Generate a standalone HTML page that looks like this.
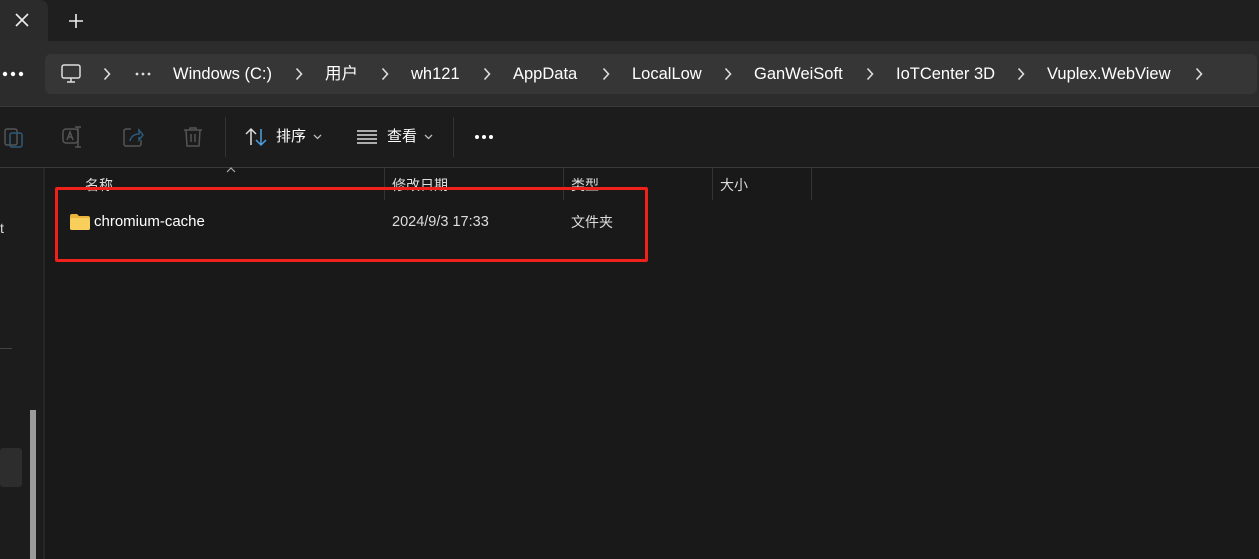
<!DOCTYPE html>
<html><head><meta charset="utf-8"><style>
*{margin:0;padding:0;box-sizing:border-box}
body{width:1259px;height:559px;overflow:hidden;background:#191919;font-family:"Liberation Sans","Noto Sans CJK SC",sans-serif;color:#fff;position:relative}
.a{position:absolute;line-height:20px}
.t{font-size:16.5px;color:#fff;white-space:nowrap}
.s{font-size:14px;white-space:nowrap}
.ch{font-size:14px;color:#ddd}
.cv{position:absolute;top:67px}
</style></head><body>
<div class="a" style="left:0;top:0;width:1259px;height:41px;background:#1f1f1f"></div>
<div class="a" style="left:0;top:0;width:48px;height:41px;background:#2b2b2b;border-top-right-radius:8px"></div>
<svg class="a" style="left:15px;top:13px" width="14" height="14" viewBox="0 0 14 14" stroke="#eee" stroke-width="1.6"><path d="M1 1l12 12M13 1L1 13"/></svg>
<svg class="a" style="left:69px;top:14px" width="14" height="14" viewBox="0 0 14 14" stroke="#eee" stroke-width="1.6"><path d="M7 0v14M0 7h14"/></svg>
<div class="a" style="left:0;top:41px;width:1259px;height:66px;background:#2c2c2c;border-bottom:1px solid #3a3a3a"></div>
<svg class="a" style="left:2px;top:71px" width="22" height="6"><circle cx="3" cy="3" r="2.2" fill="#fff"/><circle cx="11" cy="3" r="2.2" fill="#fff"/><circle cx="19" cy="3" r="2.2" fill="#fff"/></svg>
<div class="a" style="left:45px;top:54px;width:1212px;height:40px;background:#363636;border-radius:6px"></div>
<svg class="a" style="left:60px;top:63px" width="22" height="22" viewBox="0 0 22 22" fill="none" stroke="#ddd" stroke-width="1.5"><rect x="2" y="2" width="18" height="13" rx="2"/><path d="M7 19h8M11 15v4"/></svg>
<svg class="cv" style="left:103px" width="8" height="14" viewBox="0 0 8 14" fill="none" stroke="#ddd" stroke-width="1.6"><path d="M1.5 1.5l5 5.5-5 5.5"/></svg>
<svg class="a" style="left:135px;top:72px" width="16" height="4"><circle cx="2" cy="2" r="1.4" fill="#ddd"/><circle cx="8" cy="2" r="1.4" fill="#ddd"/><circle cx="14" cy="2" r="1.4" fill="#ddd"/></svg>
<div class="a t" style="left:173px;top:64px">Windows (C:)</div>
<svg class="cv" style="left:295px" width="8" height="14" viewBox="0 0 8 14" fill="none" stroke="#ddd" stroke-width="1.6"><path d="M1.5 1.5l5 5.5-5 5.5"/></svg>
<div class="a t" style="left:325px;top:64px;line-height:20px">用户</div>
<svg class="cv" style="left:381px" width="8" height="14" viewBox="0 0 8 14" fill="none" stroke="#ddd" stroke-width="1.6"><path d="M1.5 1.5l5 5.5-5 5.5"/></svg>
<div class="a t" style="left:411px;top:64px">wh121</div>
<svg class="cv" style="left:483px" width="8" height="14" viewBox="0 0 8 14" fill="none" stroke="#ddd" stroke-width="1.6"><path d="M1.5 1.5l5 5.5-5 5.5"/></svg>
<div class="a t" style="left:513px;top:64px">AppData</div>
<svg class="cv" style="left:602px" width="8" height="14" viewBox="0 0 8 14" fill="none" stroke="#ddd" stroke-width="1.6"><path d="M1.5 1.5l5 5.5-5 5.5"/></svg>
<div class="a t" style="left:632px;top:64px">LocalLow</div>
<svg class="cv" style="left:724px" width="8" height="14" viewBox="0 0 8 14" fill="none" stroke="#ddd" stroke-width="1.6"><path d="M1.5 1.5l5 5.5-5 5.5"/></svg>
<div class="a t" style="left:754px;top:64px">GanWeiSoft</div>
<svg class="cv" style="left:866px" width="8" height="14" viewBox="0 0 8 14" fill="none" stroke="#ddd" stroke-width="1.6"><path d="M1.5 1.5l5 5.5-5 5.5"/></svg>
<div class="a t" style="left:896px;top:64px">IoTCenter 3D</div>
<svg class="cv" style="left:1017px" width="8" height="14" viewBox="0 0 8 14" fill="none" stroke="#ddd" stroke-width="1.6"><path d="M1.5 1.5l5 5.5-5 5.5"/></svg>
<div class="a t" style="left:1047px;top:64px">Vuplex.WebView</div>
<svg class="cv" style="left:1195px" width="8" height="14" viewBox="0 0 8 14" fill="none" stroke="#ddd" stroke-width="1.6"><path d="M1.5 1.5l5 5.5-5 5.5"/></svg>
<div class="a" style="left:0;top:107px;width:1259px;height:61px;background:#1c1c1c;border-bottom:1px solid #3a3a3a"></div>
<svg class="a" style="left:2px;top:125px" width="24" height="24" viewBox="0 0 24 24" fill="none" stroke="#555" stroke-width="1.5"><rect x="3" y="4" width="12" height="16" rx="2"/><rect x="8" y="8" width="12" height="14" rx="2" stroke="#2c5a7a"/></svg>
<svg class="a" style="left:62px;top:126px" width="22" height="22" viewBox="0 0 22 22" fill="none" stroke="#555" stroke-width="1.5"><rect x="1" y="3" width="15" height="14" rx="3"/><path d="M16 1v20M13 1h6M13 21h6M5 14l3-8 3 8M6 11h4"/></svg>
<svg class="a" style="left:122px;top:126px" width="22" height="22" viewBox="0 0 22 22" fill="none" stroke="#555" stroke-width="1.5"><path d="M9 3H4a2 2 0 0 0-2 2v13a2 2 0 0 0 2 2h13a2 2 0 0 0 2-2v-4"/><path d="M8 15c1-5 5-7 9-7V4l4 5-4 5v-3" stroke="#2c5a7a"/></svg>
<svg class="a" style="left:183px;top:126px" width="20" height="22" viewBox="0 0 20 22" fill="none" stroke="#555" stroke-width="1.5"><path d="M1 4h18M7 4V2h6v2M3 4l1 16h12l1-16M8 8v8M12 8v8"/></svg>
<div class="a" style="left:225px;top:117px;width:1px;height:40px;background:#333"></div>
<svg class="a" style="left:245px;top:127px" width="22" height="20" viewBox="0 0 22 20" fill="none" stroke-width="1.5"><path d="M6 18V2M1 7l5-5 5 5" stroke="#ddd"/><path d="M16 2v16M11 13l5 5 5-5" stroke="#4ca0e0"/></svg>
<div class="a" style="left:276px;top:127px;font-size:15px">排序</div>
<svg class="a" style="left:313px;top:134px" width="9" height="6" fill="none" stroke="#bbb" stroke-width="1.3"><path d="M1 1l3.5 3.5L8 1"/></svg>
<svg class="a" style="left:357px;top:130px" width="20" height="14" viewBox="0 0 20 14" stroke="#ddd" stroke-width="1.5"><path d="M0 1h20M0 5h20M0 9h20M0 13h20"/></svg>
<div class="a" style="left:387px;top:127px;font-size:15px">查看</div>
<svg class="a" style="left:424px;top:134px" width="9" height="6" fill="none" stroke="#bbb" stroke-width="1.3"><path d="M1 1l3.5 3.5L8 1"/></svg>
<div class="a" style="left:453px;top:117px;width:1px;height:40px;background:#333"></div>
<svg class="a" style="left:474px;top:134px" width="22" height="6"><circle cx="3" cy="3" r="2" fill="#fff"/><circle cx="10" cy="3" r="2" fill="#fff"/><circle cx="17" cy="3" r="2" fill="#fff"/></svg>
<div class="a" style="left:0;top:168px;width:45px;height:391px;background:#1c1c1c;border-right:2px solid #262626"></div>
<div class="a" style="left:0;top:218px;font-size:14px;color:#ddd">t</div>
<div class="a" style="left:0;top:348px;width:12px;height:1px;background:#444"></div>
<div class="a" style="left:0;top:448px;width:22px;height:39px;background:#2d2d2d;border-radius:3px"></div>
<div class="a" style="left:30px;top:410px;width:6px;height:149px;background:#9a9a9a"></div>
<svg class="a" style="left:226px;top:167px" width="10" height="6" fill="none" stroke="#aaa" stroke-width="1.2"><path d="M1 5l4-4 4 4"/></svg>
<div class="a ch" style="left:85px;top:175px">名称</div>
<div class="a" style="left:384px;top:168px;width:1px;height:32px;background:#333"></div>
<div class="a ch" style="left:392px;top:175px">修改日期</div>
<div class="a" style="left:563px;top:168px;width:1px;height:32px;background:#333"></div>
<div class="a ch" style="left:571px;top:175px">类型</div>
<div class="a" style="left:712px;top:168px;width:1px;height:32px;background:#333"></div>
<div class="a ch" style="left:720px;top:175px">大小</div>
<div class="a" style="left:811px;top:168px;width:1px;height:32px;background:#333"></div>
<svg class="a" style="left:70px;top:214px" width="20" height="16" viewBox="0 0 20 16"><path d="M0 2a2 2 0 0 1 2-2h5l2 2h9a2 2 0 0 1 2 2v10a2 2 0 0 1-2 2H2a2 2 0 0 1-2-2z" fill="#e8b43c"/><rect x="0" y="4" width="20" height="12" rx="2" fill="#f7cf5a"/></svg>
<div class="a s" style="left:94px;top:212px;font-size:15px">chromium-cache</div>
<div class="a s" style="left:392px;top:212px;color:#ddd;font-size:14.5px">2024/9/3 17:33</div>
<div class="a s" style="left:571px;top:212px;color:#ddd">文件夹</div>
<div class="a" style="left:55px;top:187px;width:593px;height:75px;border:3px solid #f0201a;border-radius:2px"></div>
</body></html>
